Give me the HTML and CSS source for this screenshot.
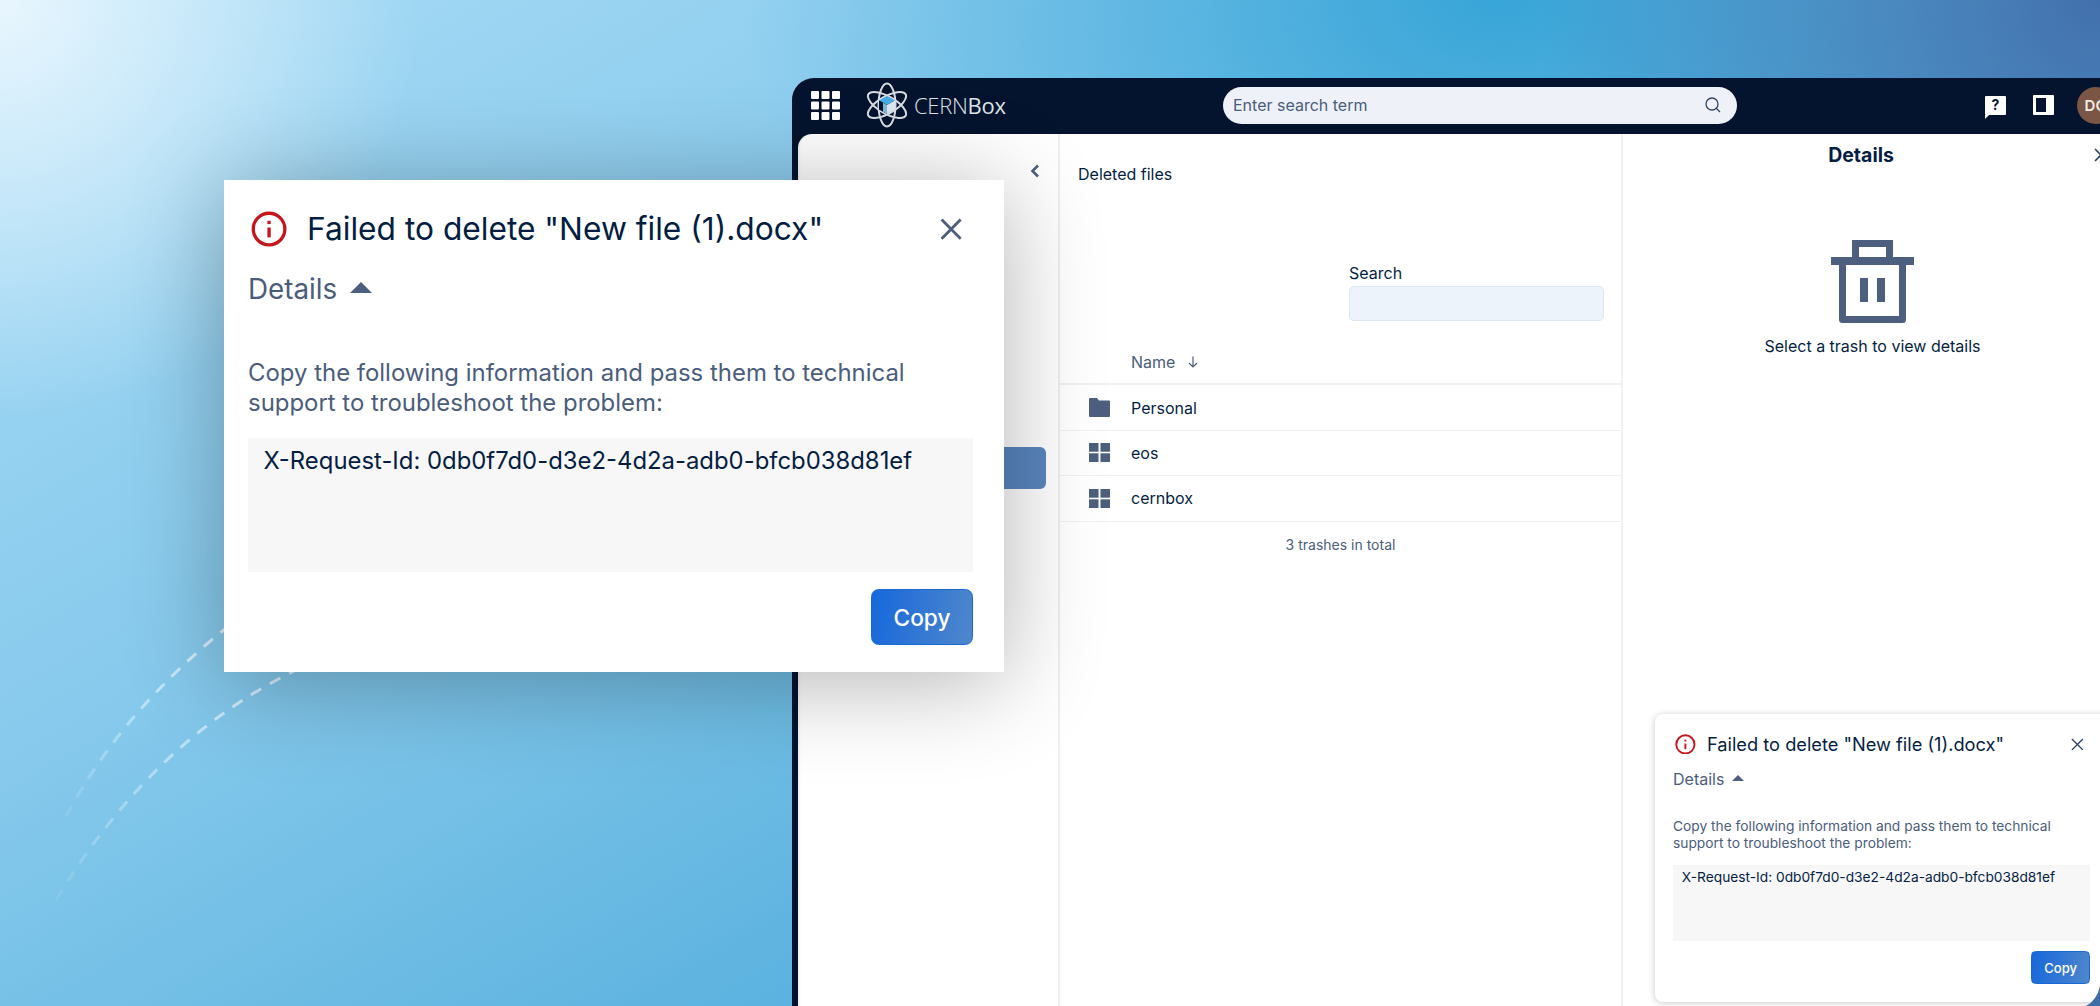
FILE: index.html
```html
<!DOCTYPE html>
<html lang="en">
<head>
  <meta charset="UTF-8">
  <title>CERNBox - Failed to delete</title>
  <link rel="stylesheet" href="styles.css">
</head>
<body>
  <svg class="arcs" width="320" height="320" viewBox="0 620 320 320" fill="none">
    <defs>
      <linearGradient id="fade1" gradientUnits="userSpaceOnUse" x1="230" y1="625" x2="63" y2="822">
        <stop offset="0" stop-color="#fff" stop-opacity="0.75"/>
        <stop offset="1" stop-color="#fff" stop-opacity="0.05"/>
      </linearGradient>
      <linearGradient id="fade2" gradientUnits="userSpaceOnUse" x1="300" y1="668" x2="52" y2="907">
        <stop offset="0" stop-color="#fff" stop-opacity="0.75"/>
        <stop offset="1" stop-color="#fff" stop-opacity="0.05"/>
      </linearGradient>
    </defs>
    <path d="M230 625 Q120 712 63 822" stroke="url(#fade1)" stroke-width="3" stroke-dasharray="12 10"/>
    <path d="M300 668 Q150 740 52 907" stroke="url(#fade2)" stroke-width="3" stroke-dasharray="12 10"/>
  </svg>

  <div class="app">
    <header class="topbar">
      <svg class="apps" width="29" height="29" viewBox="0 0 29 29" fill="#fff">
        <rect width="8" height="8" rx="1"/><rect x="10.5" width="8" height="8" rx="1"/><rect x="21" width="8" height="8" rx="1"/>
        <rect y="10.5" width="8" height="8" rx="1"/><rect x="10.5" y="10.5" width="8" height="8" rx="1"/><rect x="21" y="10.5" width="8" height="8" rx="1"/>
        <rect y="21" width="8" height="8" rx="1"/><rect x="10.5" y="21" width="8" height="8" rx="1"/><rect x="21" y="21" width="8" height="8" rx="1"/>
      </svg>
      <div class="brand">
        <svg width="42" height="46" viewBox="0 0 42 46" fill="none">
          <g stroke="#d9dde2" stroke-width="2">
            <ellipse cx="21" cy="23" rx="8.5" ry="21.5"/>
            <ellipse cx="21" cy="23" rx="8.5" ry="21.5" transform="rotate(60 21 23)"/>
            <ellipse cx="21" cy="23" rx="8.5" ry="21.5" transform="rotate(-60 21 23)"/>
          </g>
          <path d="M21 14l8 4.5-8 4.5-8-4.5z" fill="#45ade6"/>
          <path d="M13 18.5l8 4.5v9l-8-4.5z" fill="#04142e"/>
          <path d="M21 23l8-4.5v9l-8 4.5z" fill="#dbe8f0"/>
          <path d="M21 23v9l-4-2.2v-9z" fill="#7fb9dc"/>
        </svg>
        <span class="brand-name">CERN<b>Box</b></span>
      </div>
      <div class="global-search">
        <span>Enter search term</span>
        <svg width="18" height="18" viewBox="0 0 18 18" fill="none" stroke="#2f4666" stroke-width="1.3">
          <circle cx="8" cy="8" r="6"/><path d="M12.5 12.5L16 16"/>
        </svg>
      </div>
      <div class="top-actions">
        <div class="help-icon"><span>?</span></div>
        <div class="panel-icon"></div>
        <div class="avatar">DC</div>
      </div>
    </header>

    <div class="content">
      <aside class="sidebar">
        <div class="sidebar-toggle">
          <svg width="10" height="14" viewBox="0 0 10 14" fill="none" stroke="#4d5f7e" stroke-width="2.6">
            <path d="M8 1.5L2.5 7 8 12.5"/>
          </svg>
        </div>
        <div class="nav-active"></div>
      </aside>

      <main class="main">
        <div class="breadcrumb">Deleted files</div>
        <div class="filter">
          <label class="filter-label">Search</label>
          <div class="filter-input"></div>
        </div>
        <div class="row row-head">
          <span class="row-name row-name-head">Name</span>
          <svg width="14" height="14" viewBox="0 0 14 14" fill="none" stroke="#4d5f7e" stroke-width="1.2">
            <path d="M7 1.5V12M3 8l4 4 4-4"/>
          </svg>
        </div>
        <div class="row">
          <svg class="row-icon" width="21" height="19" viewBox="0 0 21 19" fill="#4d5f7e">
            <path d="M0 1a1 1 0 0 1 1-1h7l2 2.5h10a1 1 0 0 1 1 1V18a1 1 0 0 1-1 1H1a1 1 0 0 1-1-1z"/>
          </svg>
          <span class="row-name">Personal</span>
        </div>
        <div class="row">
          <svg class="row-icon" width="21" height="19" viewBox="0 0 21 19" fill="#4d5f7e">
            <rect width="9.5" height="8.7"/><rect x="11.5" width="9.5" height="8.7"/><rect y="10.3" width="9.5" height="8.7"/><rect x="11.5" y="10.3" width="9.5" height="8.7"/>
          </svg>
          <span class="row-name">eos</span>
        </div>
        <div class="row">
          <svg class="row-icon" width="21" height="19" viewBox="0 0 21 19" fill="#4d5f7e">
            <rect width="9.5" height="8.7"/><rect x="11.5" width="9.5" height="8.7"/><rect y="10.3" width="9.5" height="8.7"/><rect x="11.5" y="10.3" width="9.5" height="8.7"/>
          </svg>
          <span class="row-name">cernbox</span>
        </div>
        <div class="total">3 trashes in total</div>
      </main>

      <section class="details">
        <div class="details-head">
          <h2>Details</h2>
          <svg class="details-close" width="14" height="14" viewBox="0 0 14 14" fill="none" stroke="#2f4666" stroke-width="1.6">
            <path d="M1 1l12 12M13 1L1 13"/>
          </svg>
        </div>
        <div class="details-empty">
          <svg width="83" height="83" viewBox="0 0 83 83" fill="none" stroke="#4d5f7e" stroke-width="7">
            <path d="M24.5 18V3.5H58.5V18"/>
            <path d="M0 21H83" stroke-width="8"/>
            <path d="M11.5 25V79.5H71.5V25" stroke-linejoin="round"/>
            <path d="M33 38V62M50 38V62" stroke-width="8"/>
          </svg>
          <p>Select a trash to view details</p>
        </div>
      </section>
    </div>
  </div>

  <div class="error-card error-dialog">
    <div class="error-head">
      <svg class="error-icon" viewBox="0 0 24 24" fill="none" stroke="#c5161c" stroke-width="2.2">
        <circle cx="12" cy="12" r="10.5"/><path d="M12 11v6.5"/><path d="M12 6.5v2.2"/>
      </svg>
      <h1>Failed to delete "New file (1).docx"</h1>
      <svg class="error-close" viewBox="0 0 14 14" fill="none" stroke="#4d5f7e" stroke-width="1.8">
        <path d="M1 1l12 12M13 1L1 13"/>
      </svg>
    </div>
    <div class="error-toggle">Details <i class="caret"></i></div>
    <p class="error-text">Copy the following information and pass them to technical support to troubleshoot the problem:</p>
    <div class="error-code">X-Request-Id: 0db0f7d0-d3e2-4d2a-adb0-bfcb038d81ef</div>
    <div class="error-actions"><button class="copy-btn">Copy</button></div>
  </div>

  <div class="error-card error-toast">
    <div class="error-head">
      <svg class="error-icon" viewBox="0 0 24 24" fill="none" stroke="#c5161c" stroke-width="2.2">
        <circle cx="12" cy="12" r="10.5"/><path d="M12 11v6.5"/><path d="M12 6.5v2.2"/>
      </svg>
      <h1>Failed to delete "New file (1).docx"</h1>
      <svg class="error-close" viewBox="0 0 14 14" fill="none" stroke="#2f4666" stroke-width="1.5">
        <path d="M1 1l12 12M13 1L1 13"/>
      </svg>
    </div>
    <div class="error-toggle">Details <i class="caret"></i></div>
    <p class="error-text">Copy the following information and pass them to technical support to troubleshoot the problem:</p>
    <div class="error-code">X-Request-Id: 0db0f7d0-d3e2-4d2a-adb0-bfcb038d81ef</div>
    <div class="error-actions"><button class="copy-btn">Copy</button></div>
  </div>

  <svg class="corner" width="14" height="20" viewBox="0 0 14 20" fill="#3f6ea6">
    <path d="M14 0V20H0Q11 14 14 0z"/>
  </svg>
</body>
</html>
```

FILE: styles.css
```css
html, body {
  margin: 0;
  height: 100%;
  overflow: hidden;
}
body {
  position: relative;
  font-family: Inter, "Noto Sans", sans-serif;
  color: #041e42;
  background:
    radial-gradient(circle at 0 0, #e8f6fe 0, rgba(232, 246, 254, 0) 420px),
    radial-gradient(circle at 2100px 0, #4270ac 0, rgba(66, 112, 172, 0) 560px),
    radial-gradient(ellipse 760px 420px at 1500px 0, #38a5d8 0, rgba(56, 165, 216, 0) 100%),
    linear-gradient(150deg, #a9dcf6 0, #86c9ec 35%, #5cb3df 65%, #2f9fd6 100%);
}
h1, h2, p {
  margin: 0;
  font-weight: 400;
}

/* decoration behind the dialog */
.arcs {
  position: absolute;
  left: 0;
  top: 620px;
}
.corner {
  position: absolute;
  right: 0;
  bottom: 0;
  z-index: 4;
}

/* app window */
.app {
  position: absolute;
  left: 792px;
  top: 78px;
  width: 1330px;
  height: 960px;
  display: flex;
  flex-direction: column;
  background: #04142e;
  border-radius: 22px 22px 0 0;
}
.topbar {
  height: 56px;
  box-sizing: border-box;
  flex: none;
  display: flex;
  align-items: center;
  padding: 0 8px 2px 19px;
}
.apps {
  flex: none;
  margin-right: 26px;
}
.brand {
  width: 357px;
  flex: none;
  display: flex;
  align-items: center;
  gap: 6px;
}
.brand-name {
  font-family: "Open Sans", sans-serif;
  font-weight: 300;
  font-size: 22px;
  letter-spacing: -0.3px;
  color: #dfe3e8;
}
.brand-name b {
  font-weight: 400;
}
.global-search {
  width: 514px;
  height: 37px;
  box-sizing: border-box;
  flex: none;
  display: flex;
  align-items: center;
  justify-content: space-between;
  padding: 0 15px 0 10px;
  background: #eef2f8;
  border-radius: 19px;
  font-size: 16px;
  color: #4a5d7c;
}
.top-actions {
  margin-left: auto;
  display: flex;
  align-items: center;
}
.help-icon {
  position: relative;
  width: 21px;
  height: 19px;
  background: #fff;
  border-radius: 1px;
  margin-right: 27px;
  text-align: center;
  font-size: 14px;
  font-weight: 700;
  line-height: 18px;
  color: #04142e;
}
.help-icon::after {
  content: "";
  position: absolute;
  left: 0;
  bottom: -4px;
  border-top: 4px solid #fff;
  border-right: 4px solid transparent;
}
.panel-icon {
  width: 21px;
  height: 20px;
  box-sizing: border-box;
  background: #fff;
  padding: 3px 8px 3px 3px;
  margin-right: 23px;
  border-radius: 1px;
}
.panel-icon::before {
  content: "";
  display: block;
  height: 100%;
  background: #04142e;
}
.avatar {
  width: 37px;
  height: 37px;
  border-radius: 50%;
  background: #7b5645;
  color: #f2ece8;
  font-size: 15px;
  font-weight: 600;
  line-height: 37px;
  text-align: center;
}

.content {
  flex: 1;
  display: flex;
  margin-left: 6px;
  background: #fff;
  border-radius: 14px 0 0 0;
  overflow: hidden;
  box-shadow: inset 3px 0 3px -2px rgba(0, 0, 0, 0.08);
}
.sidebar {
  width: 262px;
  flex: none;
  box-sizing: border-box;
  border-right: 2px solid #eeeef0;
  padding: 30px 12px 0 8px;
}
.sidebar-toggle {
  height: 14px;
  display: flex;
  justify-content: flex-end;
  padding-right: 6px;
}
.nav-active {
  height: 42px;
  margin-top: 269px;
  background: #5a86bf;
  border-radius: 6px;
}

.main {
  width: 563px;
  flex: none;
  box-sizing: border-box;
  padding-top: 30px;
  border-right: 2px solid #f1f1f3;
  font-size: 16px;
}
.breadcrumb {
  padding-left: 18px;
  line-height: 20px;
}
.filter {
  margin: 80px 17px 19px auto;
  width: 255px;
}
.filter-label {
  display: block;
  line-height: 18px;
  margin-bottom: 4px;
}
.filter-input {
  height: 35px;
  box-sizing: border-box;
  background: #edf3fb;
  border: 1px solid #dce6f3;
  border-radius: 5px;
}
.row {
  height: 45.4px;
  box-sizing: border-box;
  display: flex;
  align-items: center;
  padding-left: 29px;
  border-bottom: 1px solid #f0f0f2;
}
.row-head {
  border-bottom-width: 2px;
  gap: 11px;
  padding-left: 71px;
}
.row-icon {
  flex: none;
  margin-right: 21px;
}
.row-name-head {
  color: #4a5d7c;
}
.total {
  margin-top: 13px;
  line-height: 20px;
  text-align: center;
  font-size: 14px;
  color: #4a5d7c;
}

.details {
  flex: 1;
}
.details-head {
  display: flex;
  align-items: center;
  height: 42px;
}
.details-head h2 {
  flex: 0 0 476px;
  text-align: center;
  font-size: 19.5px;
  font-weight: 700;
}
.details-close {
  flex: none;
  margin-left: -5px;
}
.details-empty {
  margin-top: 64px;
  text-align: center;
}
.details-empty svg {
  display: block;
  margin: 0 auto;
}
.details-empty p {
  margin-top: 13px;
  font-size: 16px;
  line-height: 20px;
}

/* error card, sized in em so dialog and toast share the rules */
.error-card {
  position: absolute;
  box-sizing: border-box;
  background: #fff;
}
.error-dialog {
  left: 224px;
  top: 180px;
  width: 780px;
  height: 492px;
  z-index: 3;
  padding: 21px 31px 0 24px;
  font-size: 27.8px;
  box-shadow: 0 10px 90px rgba(0, 0, 0, 0.3);
}
.error-toast {
  left: 1655px;
  top: 714px;
  width: 475px;
  height: 288px;
  z-index: 2;
  padding: 14px 40px 0 18px;
  font-size: 16px;
  border-radius: 8px;
  box-shadow: 0 1px 7px rgba(0, 0, 0, 0.22);
}
.error-head {
  height: 2em;
  display: flex;
  align-items: center;
  padding-left: 0.125em;
}
.error-icon {
  width: 1.3em;
  height: 1.3em;
  flex: none;
  margin-right: 0.7em;
}
.error-head h1 {
  flex: 1;
  font-size: 1.14em;
  white-space: nowrap;
}
.error-close {
  width: 0.8em;
  height: 0.8em;
  flex: none;
  margin-right: 0.375em;
}
.error-toggle {
  margin-top: 0.55em;
  height: 1.25em;
  line-height: 1.25em;
  color: #4a5d7c;
  display: flex;
  align-items: center;
  gap: 0.25em;
}
.caret {
  width: 0;
  height: 0;
  border-left: 0.4em solid transparent;
  border-right: 0.4em solid transparent;
  border-bottom: 0.4em solid #4d5f7e;
  margin-left: 0.2em;
  margin-top: -0.15em;
}
.error-text {
  margin-top: 2.15em;
  font-size: 0.861em;
  line-height: 1.24em;
  color: #4a5d7c;
}
.error-code {
  margin-top: 0.87em;
  height: 5.6em;
  box-sizing: border-box;
  padding: 0.34em 0.645em;
  background: #f7f7f8;
  font-size: 0.859em;
  line-height: 1.25em;
}
.error-actions {
  display: flex;
  justify-content: flex-end;
  margin-top: 0.62em;
}
.copy-btn {
  width: 4.5em;
  height: 2.48em;
  padding: 0;
  font: inherit;
  font-size: 0.815em;
  font-weight: 500;
  color: #fff;
  background: linear-gradient(100deg, #1668dc, #4f87cb);
  border: 1px solid #1a68d6;
  border-radius: 0.34em;
}
```
